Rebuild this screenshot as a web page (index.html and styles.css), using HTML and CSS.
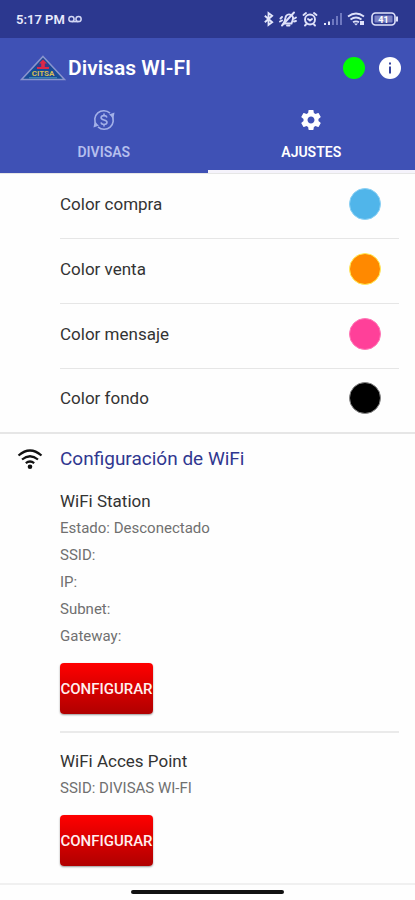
FILE: index.html
```html
<!DOCTYPE html>
<html lang="es">
<head>
    <meta charset="UTF-8">
    <meta name="viewport" content="width=device-width, initial-scale=1.0">
    <title>Divisas WI-FI</title>
    <link rel="stylesheet" href="styles.css">
</head>
<body>
    <!-- phone status bar -->
    <div class="status-bar">
        <span class="clock">5:17 PM</span>
        <svg class="voicemail" width="14" height="8" viewBox="0 0 15 8" fill="none" stroke="#d3d7f5" stroke-width="1.6">
            <circle cx="3.7" cy="4" r="2.8"/>
            <circle cx="11.3" cy="4" r="2.8"/>
            <path d="M3.7 6.8h7.6"/>
        </svg>
        <div class="status-icons">
            <svg width="11" height="16" viewBox="0 0 12 16" fill="none" stroke="#e4e7fb" stroke-width="2">
                <path d="M2 4.5l8 7L6 14.500V1.500l4 3-8 7"/>
            </svg>
            <svg width="18" height="16" viewBox="0 0 18 16" fill="none" stroke="#dfe2fa" stroke-width="1.900" stroke-linecap="round">
                <path d="M5 11.5c1-1.500 1-3 1.500-5C7 4 9.500 2.500 12 4s2.500 3.500 1.500 5.500l-1 3H4.500z"/>
                <path d="M8 14.500h2.500M15 1.500L3 14.500M1.500 7.500L3 6M1 10.500l2-1M15.500 7.500l1.500-1M15 10.500l2-.5"/>
            </svg>
            <svg width="16" height="16" viewBox="0 0 16 16" fill="none" stroke="#dfe2fa" stroke-width="1.9" stroke-linecap="round">
                <circle cx="8" cy="8.500" r="5"/>
                <path d="M1.500 4L4 2M14.500 4L12 2M6 8l2 1.500L10 8M4 13.500l-1 1M12 13.500l1 1"/>
            </svg>
            <svg width="19" height="14" viewBox="0 0 19 14">
                <path fill="#e4e7fb" d="M1 11h2v2H1zM5 9.500h2V13H5z"/>
                <path fill="#6f78c0" d="M9 7h2v6H9zM13 4h2v9h-2zM17 1h2v12h-2z"/>
            </svg>
            <svg width="19" height="14" viewBox="0 0 19 14" fill="none" stroke="#dfe2fa" stroke-width="1.8">
                <path d="M1 4.500q8-6 16 0M3.500 7.500q5.500-4 11 0M6 10.300q3-2 6 0"/>
                <path fill="#dfe2fa" stroke="none" d="M9 13.500l-2-2h4zM13 9h4v4h-4z"/>
            </svg>
            <svg width="28" height="14" viewBox="0 0 28 14">
                <rect x="1" y="1" width="23" height="12" rx="3.500" fill="none" stroke="#dfe2fa" stroke-width="1.600"/>
                <rect x="3.500" y="3.500" width="18" height="7" rx="1" fill="#7b82c4"/>
                <path d="M26 4.500v5" stroke="#dfe2fa" stroke-width="2"/>
                <text x="12.500" y="10.500" text-anchor="middle" class="battery-text">41</text>
            </svg>
        </div>
    </div>

    <header class="app-bar">
        <svg class="logo" width="46" height="26" viewBox="0 0 46 26">
            <path d="M23 1.500L44.500 24.500H1.500z" fill="#174b96" stroke="#8994cd" stroke-width="1.600"/>
            <path d="M23 4l8 9H15z" fill="#343c8a"/>
            <path d="M23 4.500l4 4h-2.200v3.500H29v2H17v-2h4.200V8.500H19z" fill="#dc2947"/>
            <text x="23" y="21" text-anchor="middle" class="logo-text">CITSA</text>
            <path d="M9 22.800h28" stroke="#4d9bb8" stroke-width="1"/>
        </svg>
        <h1>Divisas WI-FI</h1>
        <span class="online-dot" role="img" aria-label="Conectado"></span>
        <button class="info-btn" aria-label="Información">
            <svg width="22" height="22" viewBox="0 0 22 22">
                <circle cx="11" cy="11" r="11" fill="#fff"/>
                <path d="M10 5.500h2v2h-2zM10 9.500h2v7h-2z" fill="#35449f"/>
            </svg>
        </button>
    </header>

    <nav class="tabs">
        <button class="tab">
            <svg width="22" height="22" viewBox="0 0 22 22" fill="none" stroke="#a3b0e8" stroke-width="1.600">
                <path d="M3.500 16A9 9 0 0 1 17 4.200M18.500 6A9 9 0 0 1 5 17.800"/>
                <path d="M0.500 18.500l1-5.500 4.500 3.500zM21.500 3.500l-1 5.500L16 5.500z" fill="#a3b0e8" stroke="none"/>
                <path d="M14 8.500c-.4-1.300-1.500-1.900-3-1.900-1.800 0-2.900.8-2.900 2.100 0 3 5.900 1.600 5.900 4.600 0 1.400-1.200 2.200-3 2.200-1.600 0-2.700-.7-3.100-2M11 4.500v2M11 15.500v2"/>
            </svg>
            DIVISAS
        </button>
        <button class="tab active">
            <svg width="24" height="24" viewBox="0 0 24 24" fill="#fff">
                <path d="M19.430 12.980c.040-.320.070-.640.070-.980s-.030-.660-.070-.980l2.110-1.650c.190-.150.240-.420.120-.640l-2-3.460c-.120-.220-.390-.300-.610-.220l-2.490 1c-.520-.400-1.080-.730-1.690-.980l-.380-2.650C14.460 2.180 14.250 2 14 2h-4c-.250 0-.460.180-.490.420l-.380 2.650c-.610.250-1.170.590-1.690.980l-2.490-1c-.230-.090-.490 0-.610.220l-2 3.460c-.130.220-.070.490.120.640l2.110 1.650c-.040.320-.070.650-.070.980s.030.660.070.980l-2.110 1.650c-.190.150-.240.420-.120.640l2 3.460c.120.220.390.300.610.220l2.490-1c.520.400 1.080.730 1.690.980l.380 2.650c.030.240.240.420.490.420h4c.250 0 .460-.180.490-.420l.380-2.650c.610-.250 1.170-.590 1.690-.980l2.490 1c.230.090.490 0 .610-.220l2-3.460c.120-.220.070-.490-.120-.640l-2.110-1.650zM12 15.500c-1.930 0-3.500-1.570-3.500-3.500s1.570-3.500 3.500-3.500 3.500 1.570 3.500 3.500-1.570 3.500-3.500 3.500z"/>
            </svg>
            AJUSTES
        </button>
    </nav>

    <main>
        <!-- colors -->
        <section class="colors">
            <div class="color-row">
                <span id="lblCompra">Color compra</span>
                <button class="swatch buy" aria-labelledby="lblCompra"></button>
            </div>
            <div class="color-row">
                <span id="lblVenta">Color venta</span>
                <button class="swatch sell" aria-labelledby="lblVenta"></button>
            </div>
            <div class="color-row">
                <span id="lblMensaje">Color mensaje</span>
                <button class="swatch message" aria-labelledby="lblMensaje"></button>
            </div>
            <div class="color-row">
                <span id="lblFondo">Color fondo</span>
                <button class="swatch background" aria-labelledby="lblFondo"></button>
            </div>
        </section>

        <!-- wifi settings -->
        <section class="wifi">
            <div class="wifi-title">
                <svg width="26" height="22" viewBox="0 0 26 22" fill="none" stroke="#111" stroke-width="2.200">
                    <path d="M1.500 7.500Q13-2.500 24.500 7.500M5 11.500q8-6.500 16 0M8.800 15.200q4.200-3.400 8.400 0"/>
                    <circle cx="13" cy="18.800" r="2.300" fill="#111" stroke="none"/>
                </svg>
                <h2>Configuración de WiFi</h2>
            </div>

            <div class="network">
                <h3>WiFi Station</h3>
                <p>Estado: Desconectado</p>
                <p>SSID:</p>
                <p>IP:</p>
                <p>Subnet:</p>
                <p>Gateway:</p>
                <button class="btn">CONFIGURAR</button>
            </div>

            <div class="network">
                <h3>WiFi Acces Point</h3>
                <p>SSID: DIVISAS WI-FI</p>
                <button class="btn">CONFIGURAR</button>
            </div>
        </section>
    </main>

    <div class="gesture-bar"></div>
</body>
</html>
```

FILE: styles.css
```css
:root {
    --main-color: #3f51b5;
    --dark-blue: #2c388f;
    --line: #e6e6e6;
}

* {
    box-sizing: border-box;
}

body {
    margin: 0;
    font-family: Roboto, "Liberation Sans", sans-serif;
    background: #fefefe;
    color: #333;
}

h1, h2, h3, p {
    margin: 0;
}

button {
    border: none;
    padding: 0;
    font-family: inherit;
    cursor: pointer;
}

svg {
    display: block;
    flex-shrink: 0;
}

/* status bar */
.status-bar {
    display: flex;
    align-items: center;
    height: 38px;
    padding: 0 16px;
    background: var(--dark-blue);
    color: #e8eafc;
}

.clock {
    font-size: 13px;
    font-weight: 600;
}

.voicemail {
    margin-left: 3px;
}

.status-icons {
    display: flex;
    align-items: center;
    gap: 5px;
    margin-left: auto;
}

.battery-text {
    font-size: 9px;
    font-weight: 700;
    fill: #fff;
}

/* app bar */
.app-bar {
    display: flex;
    align-items: center;
    height: 60px;
    padding: 0 14px 0 20px;
    background: var(--main-color);
    color: white;
}

.app-bar h1 {
    flex: 1;
    margin-left: 2px;
    font-size: 21px;
    font-weight: 600;
}

.logo-text {
    font-size: 8px;
    font-weight: 700;
    fill: #d5bd55;
}

.online-dot {
    width: 22px;
    height: 22px;
    border-radius: 50%;
    background: #00ff00;
}

.info-btn {
    margin-left: 14px;
    background: none;
}

/* tabs */
.tabs {
    display: flex;
    background: var(--main-color);
}

.tab {
    flex: 1;
    display: flex;
    flex-direction: column;
    align-items: center;
    justify-content: space-between;
    height: 75px;
    padding: 11px 0 7px;
    border-bottom: 3px solid transparent;
    background: none;
    color: #b5bfed;
    font-size: 14px;
    font-weight: 600;
    line-height: 22px;
}

.tab.active {
    padding-top: 10px;
    border-bottom-color: #f5f3fb;
    color: white;
}

/* color list */
.colors {
    border-top: 1px solid var(--line);
    border-bottom: 2px solid var(--line);
}

.color-row {
    display: flex;
    align-items: center;
    justify-content: space-between;
    height: 65px;
    margin: 0 16px 0 60px;
    padding-right: 18px;
    padding-bottom: 5px;
    border-bottom: 1px solid var(--line);
    font-size: 17px;
}

.color-row:last-child {
    height: 63px;
    border-bottom: none;
}

.swatch {
    width: 32px;
    height: 32px;
    border: 1px solid transparent;
    border-radius: 50%;
}

.buy {
    background: #50b5ea;
    border-color: #8bd1f5;
}

.sell {
    background: #ff8900;
    border-color: #ffee58;
}

.message {
    background: #ff4099;
    border-color: #ff77b6;
}

.background {
    background: #000;
    border-color: #888;
}

/* wifi */
.wifi {
    padding-top: 11px;
    border-bottom: 2px solid #f0f0f0;
}

.wifi-title {
    display: flex;
    align-items: center;
    gap: 17px;
    padding-left: 17px;
}

.wifi-title h2 {
    color: #303790;
    font-size: 19px;
    font-weight: 400;
    line-height: 28px;
}

.network {
    margin: 0 16px 0 60px;
    padding: 16px 0 17px;
    border-bottom: 2px solid #eaeaea;
}

.network:last-child {
    border-bottom: none;
}

.network h3 {
    margin-bottom: 2px;
    font-size: 17px;
    font-weight: 400;
    line-height: 24px;
}

.network p {
    color: #707070;
    font-size: 15px;
    line-height: 27px;
}

.btn {
    display: flex;
    align-items: center;
    justify-content: center;
    width: 93px;
    height: 51px;
    margin-top: 13px;
    border-radius: 4px;
    background: linear-gradient(#ff0000, #b00000);
    box-shadow: 0 1px 2px rgba(0,0,0,0.4);
    color: #fff0f0;
    font-size: 15px;
    font-weight: 500;
}

/* home gesture line */
.gesture-bar {
    width: 37%;
    height: 4px;
    margin: 5px auto 0;
    border-radius: 2px;
    background: #111;
}
```
